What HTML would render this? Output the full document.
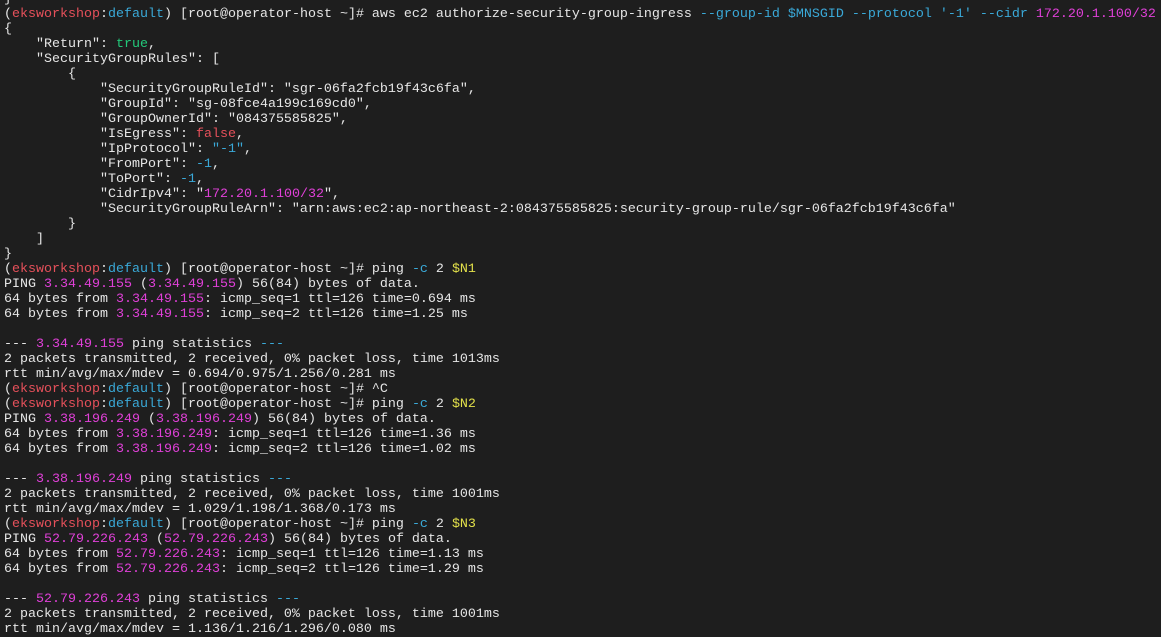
<!DOCTYPE html>
<html><head><meta charset="utf-8"><style>
html,body{margin:0;padding:0;background:#1e1e1e;width:1161px;height:636px;overflow:hidden}
pre{position:absolute;left:4px;top:-8px;margin:0;font-family:"Liberation Mono",monospace;font-size:13.33px;line-height:15px;color:#e6e6e6;white-space:pre}
.r{color:#e5505a}.c{color:#3aa9d8}.m{color:#e040d8}.g{color:#23c97a}.y{color:#e2e04a}
</style></head><body><pre>}
(<span class="r">eksworkshop</span>:<span class="c">default</span>) [root@operator-host ~]# aws ec2 authorize-security-group-ingress <span class="c">--group-id</span> <span class="c">$MNSGID</span> <span class="c">--protocol</span> <span class="c">'-1'</span> <span class="c">--cidr</span> <span class="m">172.20.1.100/32</span>
{
    "Return": <span class="g">true</span>,
    "SecurityGroupRules": [
        {
            "SecurityGroupRuleId": "sgr-06fa2fcb19f43c6fa",
            "GroupId": "sg-08fce4a199c169cd0",
            "GroupOwnerId": "084375585825",
            "IsEgress": <span class="r">false</span>,
            "IpProtocol": <span class="c">"-1"</span>,
            "FromPort": <span class="c">-1</span>,
            "ToPort": <span class="c">-1</span>,
            "CidrIpv4": "<span class="m">172.20.1.100/32</span>",
            "SecurityGroupRuleArn": "arn:aws:ec2:ap-northeast-2:084375585825:security-group-rule/sgr-06fa2fcb19f43c6fa"
        }
    ]
}
(<span class="r">eksworkshop</span>:<span class="c">default</span>) [root@operator-host ~]# ping <span class="c">-c</span> 2 <span class="y">$N1</span>
PING <span class="m">3.34.49.155</span> (<span class="m">3.34.49.155</span>) 56(84) bytes of data.
64 bytes from <span class="m">3.34.49.155</span>: icmp_seq=1 ttl=126 time=0.694 ms
64 bytes from <span class="m">3.34.49.155</span>: icmp_seq=2 ttl=126 time=1.25 ms

--- <span class="m">3.34.49.155</span> ping statistics <span class="c">---</span>
2 packets transmitted, 2 received, 0% packet loss, time 1013ms
rtt min/avg/max/mdev = 0.694/0.975/1.256/0.281 ms
(<span class="r">eksworkshop</span>:<span class="c">default</span>) [root@operator-host ~]# ^C
(<span class="r">eksworkshop</span>:<span class="c">default</span>) [root@operator-host ~]# ping <span class="c">-c</span> 2 <span class="y">$N2</span>
PING <span class="m">3.38.196.249</span> (<span class="m">3.38.196.249</span>) 56(84) bytes of data.
64 bytes from <span class="m">3.38.196.249</span>: icmp_seq=1 ttl=126 time=1.36 ms
64 bytes from <span class="m">3.38.196.249</span>: icmp_seq=2 ttl=126 time=1.02 ms

--- <span class="m">3.38.196.249</span> ping statistics <span class="c">---</span>
2 packets transmitted, 2 received, 0% packet loss, time 1001ms
rtt min/avg/max/mdev = 1.029/1.198/1.368/0.173 ms
(<span class="r">eksworkshop</span>:<span class="c">default</span>) [root@operator-host ~]# ping <span class="c">-c</span> 2 <span class="y">$N3</span>
PING <span class="m">52.79.226.243</span> (<span class="m">52.79.226.243</span>) 56(84) bytes of data.
64 bytes from <span class="m">52.79.226.243</span>: icmp_seq=1 ttl=126 time=1.13 ms
64 bytes from <span class="m">52.79.226.243</span>: icmp_seq=2 ttl=126 time=1.29 ms

--- <span class="m">52.79.226.243</span> ping statistics <span class="c">---</span>
2 packets transmitted, 2 received, 0% packet loss, time 1001ms
rtt min/avg/max/mdev = 1.136/1.216/1.296/0.080 ms
</pre></body></html>
